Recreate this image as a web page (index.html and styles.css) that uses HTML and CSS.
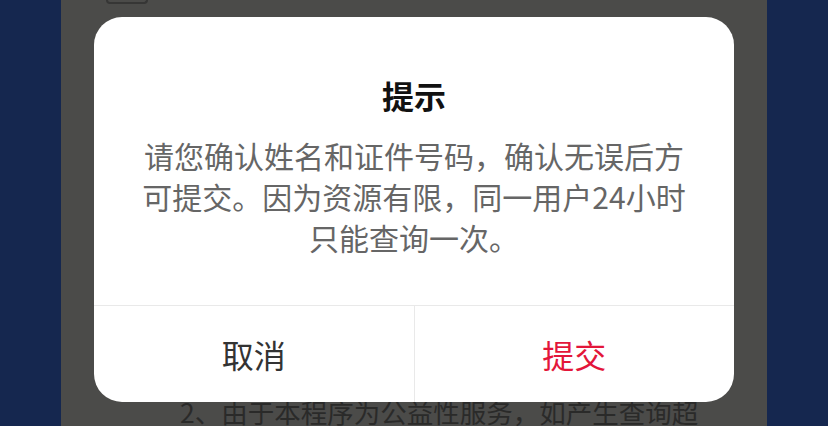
FILE: index.html
```html
<!doctype html>
<html lang="zh-CN">
  <head>
    <meta charset="utf-8">
    <title>查询</title>
    <link rel="stylesheet" href="styles.css">
  </head>
  <body>
    <div class="page">
      <div class="back-btn"></div>
      <p class="notice">2、由于本程序为公益性服务，如产生查询超</p>

      <!-- confirm dialog over the page -->
      <div class="mask">
        <div class="dialog">
          <div class="dialog-body">
            <h2 class="dialog-title">提示</h2>
            <p class="dialog-text">请您确认姓名和证件号码，确认无误后方可提交。因为资源有限，同一用户24小时只能查询一次。</p>
          </div>
          <div class="dialog-actions">
            <button class="btn btn-cancel">取消</button>
            <button class="btn btn-ok">提交</button>
          </div>
        </div>
      </div>
    </div>
  </body>
</html>
```

FILE: styles.css
```css
html, body {
    height: 100%;
}

body {
    margin: 0;
    padding: 0;
    display: flex;
    justify-content: center;
    background-color: #15274f;
    font-family: "Noto Sans CJK SC", "Noto Sans", sans-serif;
    overflow: hidden;
}

.page {
    position: relative;
    width: 706px;
    height: 426px;
    display: flex;
    flex-direction: column;
    justify-content: space-between;
    background-color: #4b4b49;
    overflow: hidden;
}

.back-btn {
    width: 38px;
    height: 2px;
    margin-left: 45px;
    border: 2px solid #363635;
    border-top: none;
    border-radius: 0 0 6px 6px;
}

.notice {
    margin: 0;
    padding-left: 119px;
    font-size: 26.5px;
    line-height: 28px;
    color: #2a2a29;
    white-space: nowrap;
}

.mask {
    position: absolute;
    inset: 0;
    display: flex;
    justify-content: center;
    align-items: flex-start;
    padding-top: 17px;
}

.dialog {
    width: 640px;
    background-color: #fff;
    border-radius: 28px;
    overflow: hidden;
}

.dialog-body {
    padding: 56px 46px 47px;
    text-align: center;
    border-bottom: 1px solid #e9e9e9;
}

.dialog-title {
    margin: 0 0 18px;
    font-size: 32px;
    line-height: 44px;
    font-weight: 700;
    color: #111;
}

.dialog-text {
    margin: 0;
    font-size: 30px;
    line-height: 41px;
    color: #666;
}

.dialog-actions {
    display: flex;
    height: 96px;
}

.btn {
    flex: 1;
    border: none;
    background: none;
    font-family: inherit;
    font-size: 32px;
    padding: 0;
}

.btn-cancel {
    color: #333;
    border-right: 1px solid #e9e9e9;
}

.btn-ok {
    color: #e3163a;
}
```
